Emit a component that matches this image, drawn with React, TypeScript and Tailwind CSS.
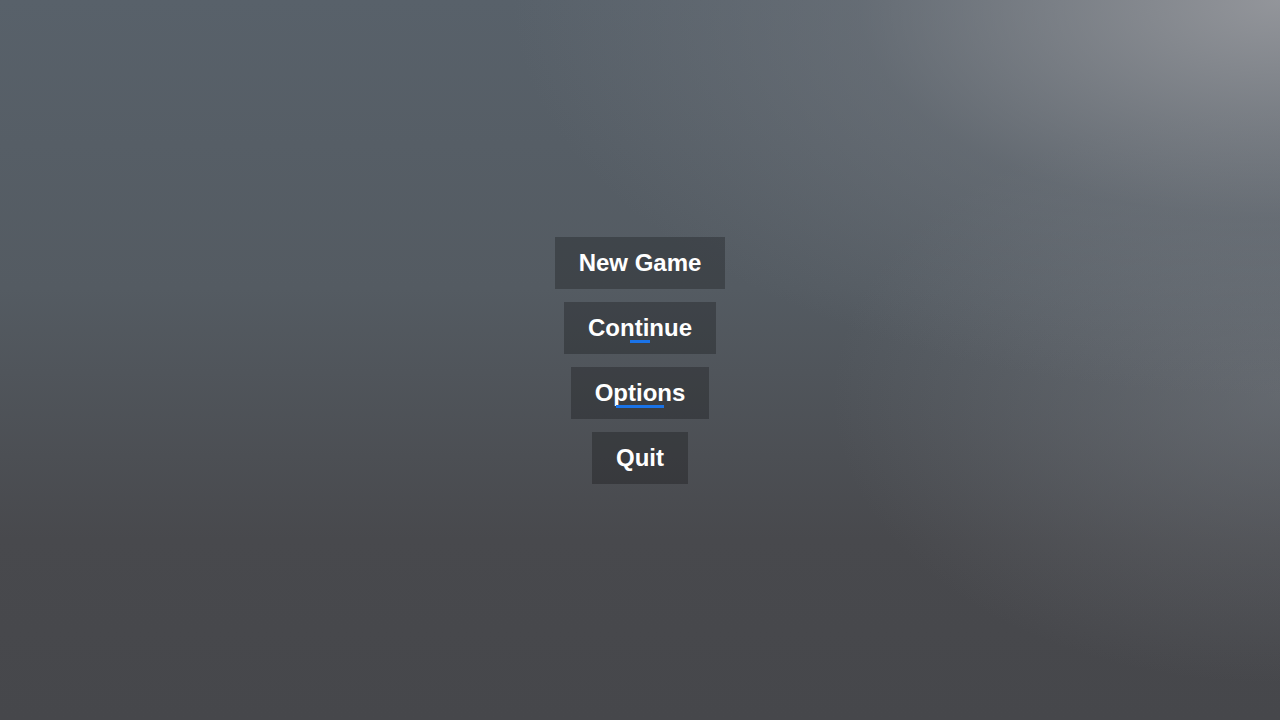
import React from 'react';

const items = [
    { label: 'New Game', bar: '' },
    { label: 'Continue', bar: 'w-[20px]' },
    { label: 'Options', bar: 'w-[48px]' },
    { label: 'Quit', bar: '' },
];

const MenuButton: React.FC<{ label: string; bar: string }> = ({ label, bar }) => (
    <button className="relative h-[52px] px-6 bg-black/25 text-white text-[24px] leading-[28px] font-bold">
        {label}
        {bar && (
            <span className={`absolute left-1/2 -translate-x-1/2 bottom-[11px] h-[3px] bg-[#1a73e8] ${bar}`} />
        )}
    </button>
);

export default function App() {
    return (
        <div className="w-full h-screen flex flex-col items-center justify-center gap-[13px] font-['Liberation_Sans',Arial,sans-serif] bg-[radial-gradient(ellipse_60%_55%_at_100%_0%,rgba(150,152,157,0.95),rgba(120,125,132,0.4)_55%,transparent_100%),radial-gradient(ellipse_35%_40%_at_100%_55%,rgba(125,130,137,0.45),transparent_100%),linear-gradient(to_bottom,#58616a_0%,#545b62_40%,#48494d_75%,#46474b_100%)]">
            {items.map((item) => (
                <MenuButton key={item.label} label={item.label} bar={item.bar} />
            ))}
        </div>
    );
}
